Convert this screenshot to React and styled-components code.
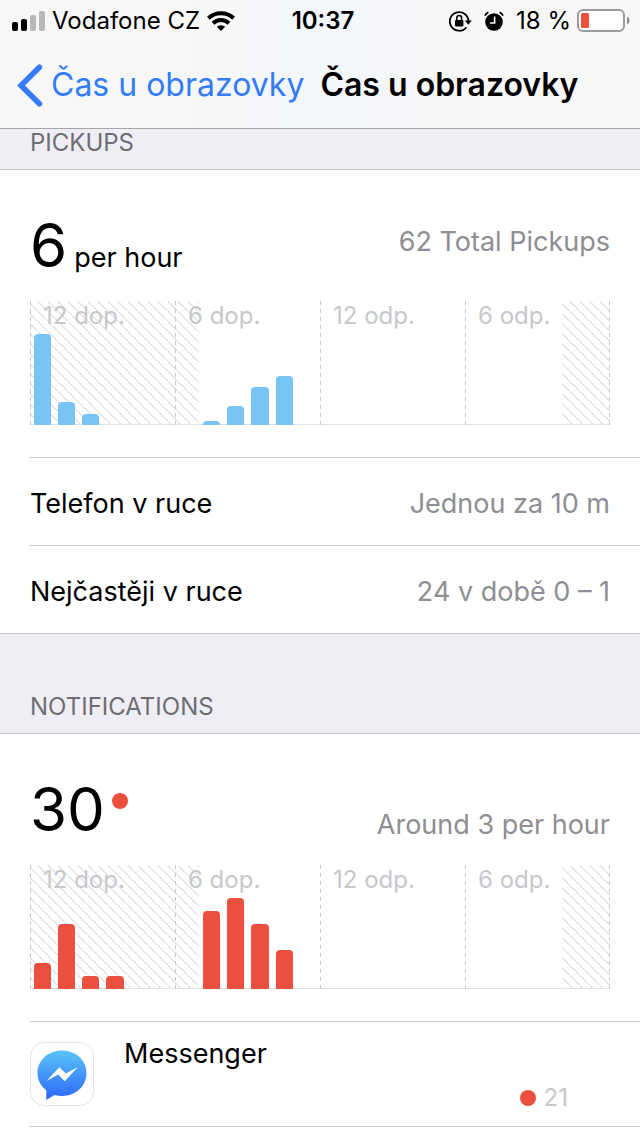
import styled, { createGlobalStyle } from "styled-components";

const GlobalStyle = createGlobalStyle`
  * {
    box-sizing: border-box;
  }

  body {
    margin: 0;
    background: #ffffff;
    color: #000000;
    font-family: Inter, "Liberation Sans", sans-serif;
    font-size: 27px;
    line-height: 32px;
  }

  h1,
  h2,
  h3,
  p,
  ul {
    margin: 0;
    padding: 0;
    font-size: inherit;
    font-weight: 400;
  }
`;

const Header = styled.header`
  background: linear-gradient(90deg, #f7f7f7 30%, #f3f6fb 50%, #f7f7f7 75%);
  border-bottom: 1px solid #a7a7ab;
`;

const StatusBar = styled.div`
  display: grid;
  grid-template-columns: 1fr auto 1fr;
  align-items: center;
  height: 42px;
  padding: 0 10px 0 12px;
  font-size: 24px;
  line-height: 28px;
`;

const StatusGroup = styled.div`
  display: flex;
  align-items: center;
  justify-content: ${(props) => (props.$end ? "flex-end" : "flex-start")};
  gap: ${(props) => (props.$end ? "12px" : "7px")};
  white-space: nowrap;
`;

const Clock = styled.time`
  padding-left: 4px;
  font-weight: 600;
`;

const BatteryGroup = styled.span`
  display: flex;
  align-items: center;
  gap: 6px;
`;

const NavBar = styled.nav`
  display: flex;
  align-items: center;
  height: 86px;
  padding: 0 16px;
  gap: 16px;
  font-size: 32px;
  line-height: 40px;
  white-space: nowrap;
`;

const BackLink = styled.a`
  display: flex;
  align-items: center;
  gap: 8px;
  color: #347cf7;
  text-decoration: none;
`;

const Title = styled.h1`
  font-weight: 600;
`;

const SectionHeader = styled.h2`
  display: flex;
  align-items: flex-end;
  height: ${(props) => (props.$scrolled ? "41px" : "101px")};
  padding: 0 30px 12px;
  border-top: ${(props) => (props.$scrolled ? "none" : "1px solid #c8c7cc")};
  border-bottom: 1px solid #c8c7cc;
  background: #efeef4;
  color: #6d6d72;
  font-size: 24px;
  line-height: 28px;
`;

const Summary = styled.div`
  display: flex;
  align-items: flex-start;
  justify-content: space-between;
  height: 131px;
  padding: 39px 30px 0;
`;

const Total = styled.p`
  display: flex;
  align-items: baseline;
  gap: 7px;
`;

const Big = styled.span`
  font-size: 60px;
  line-height: 72px;
`;

const Average = styled.p`
  padding-top: ${(props) => (props.$low ? "36px" : "17px")};
  color: #8e8e93;
`;

const Dot = styled.span`
  width: 16px;
  height: 16px;
  border-radius: 50%;
  background: #eb4f3d;
  align-self: ${(props) => (props.$raised ? "flex-start" : "center")};
  margin-top: ${(props) => (props.$raised ? "20px" : "0")};
`;

const Plot = styled.div`
  display: grid;
  grid-template-columns: repeat(24, 1fr);
  grid-template-rows: 124px;
  margin: 0 30px 32px;
  background: linear-gradient(#e2e1e8, #e2e1e8) bottom / 100% 1px no-repeat;
`;

const Downtime = styled.div`
  grid-row: 1;
  grid-column: ${(props) => props.$from + 1} / ${(props) => props.$to + 1};
  margin-bottom: 1px;
  background: linear-gradient(
      45deg,
      transparent 45%,
      #e4e4e7 45%,
      #e4e4e7 55%,
      transparent 55%
    )
    8px 0 / 10px 10px;
`;

const dashes = "repeating-linear-gradient(#c7c7cc 0 4px, transparent 4px 8px)";

const Quarter = styled.div`
  grid-row: 1;
  grid-column: ${(props) => props.$from + 1} / span 6;
  padding-left: 13px;
  background: ${dashes} left / 1px 100% no-repeat
    ${(props) => props.$last && `, ${dashes} right / 1px 100% no-repeat`};
  color: #c7c7cc;
  font-size: 24px;
  line-height: 30px;
`;

const Bar = styled.div`
  grid-row: 1;
  grid-column: ${(props) => props.$hour + 1};
  align-self: end;
  margin: 0 3px 0 4px;
  border-radius: 4px 4px 0 0;
  background: ${(props) => props.$color};
`;

const List = styled.ul`
  list-style: none;
  padding-left: 30px;
`;

const Row = styled.li`
  display: flex;
  align-items: center;
  justify-content: space-between;
  height: 88px;
  padding: 4px 30px 0 0;
  border-top: 1px solid #c8c7cc;
`;

const Value = styled.span`
  color: #8e8e93;
`;

const AppRow = styled.li`
  display: flex;
  height: 106px;
  gap: 30px;
  padding: 20px 72px 0 0;
  border-top: 1px solid #c8c7cc;
  border-bottom: 1px solid #c8c7cc;
`;

const AppInfo = styled.div`
  flex: 1;
  display: flex;
  flex-direction: column;
  justify-content: space-between;
  padding-bottom: 14px;
  margin-top: -4px;
`;

const Count = styled.p`
  display: flex;
  align-self: flex-end;
  gap: 8px;
  color: #c7c7cc;
  font-size: 24px;
  line-height: 28px;
`;

// hour of day -> count
const PICKUPS = { 0: 24, 1: 6, 2: 3, 7: 1, 8: 5, 9: 10, 10: 13 };
const NOTIFICATIONS = { 0: 2, 1: 5, 2: 1, 3: 1, 7: 6, 8: 7, 9: 5, 10: 3 };

const QUARTERS = ["12 dop.", "6 dop.", "12 odp.", "6 odp."];
const BAR_AREA = 91;

function DayChart({ data, color }) {
  const max = Math.max(...Object.values(data));
  return (
    <Plot>
      <Downtime $from={0} $to={7} />
      <Downtime $from={22} $to={24} />
      {QUARTERS.map((label, i) => (
        <Quarter key={label} $from={i * 6} $last={i === 3}>
          {label}
        </Quarter>
      ))}
      {Object.entries(data).map(([hour, count]) => (
        <Bar
          key={hour}
          $hour={Number(hour)}
          $color={color}
          style={{ height: Math.round((count / max) * BAR_AREA) }}
        />
      ))}
    </Plot>
  );
}

const SignalIcon = () => (
  <svg width="33" height="20" viewBox="0 0 33 20" aria-hidden="true">
    <rect x="0" y="11" width="6" height="9" rx="2" />
    <rect x="9" y="8" width="6" height="12" rx="2" />
    <rect x="18" y="4" width="6" height="16" rx="2" fill="#b9b9bb" />
    <rect x="27" y="0" width="6" height="20" rx="2" fill="#b9b9bb" />
  </svg>
);

const WifiIcon = () => (
  <svg width="28" height="20" viewBox="0 0 28 20" aria-hidden="true">
    <path d="M14 20 9.8 15.8a6.2 6.2 0 0 1 8.4 0z" />
    <g fill="none" stroke="#000" strokeWidth="4">
      <path d="M6 12.2a11.5 11.5 0 0 1 16 0" />
      <path d="M1.4 7.2a18.4 18.4 0 0 1 25.2 0" />
    </g>
  </svg>
);

const LockIcon = () => (
  <svg width="23" height="21" viewBox="0 0 23 21" aria-hidden="true">
    <path
      d="M17.4 16.2A9.3 9.3 0 1 1 19.4 10"
      fill="none"
      stroke="#000"
      strokeWidth="1.8"
    />
    <path d="M15.8 9.4h7L19.3 13.8z" />
    <rect x="6" y="9" width="8.4" height="6.6" rx="1" />
    <path
      d="M7.8 9.4V7a2.4 2.4 0 0 1 4.8 0v2.4"
      fill="none"
      stroke="#000"
      strokeWidth="1.5"
    />
  </svg>
);

const AlarmIcon = () => (
  <svg width="20" height="20" viewBox="0 0 20 20" aria-hidden="true">
    <circle cx="10" cy="11" r="8.8" />
    <path
      d="M.9 4.6A8 8 0 0 1 4.4 1.2M15.6 1.2a8 8 0 0 1 3.5 3.4"
      fill="none"
      stroke="#000"
      strokeWidth="1.8"
    />
    <path d="M10.6 5.6V12H6" fill="none" stroke="#fff" strokeWidth="1.6" />
  </svg>
);

const BatteryIcon = () => (
  <svg width="53" height="24" viewBox="0 0 53 24" aria-hidden="true">
    <rect
      x="1"
      y="1"
      width="46"
      height="21"
      rx="5"
      fill="#fdfdfd"
      stroke="#9b9b9d"
      strokeWidth="2"
    />
    <rect x="4" y="4" width="8" height="15" rx="1.5" fill="#eb4f3d" />
    <path d="M50 7.6a4.4 4.4 0 0 1 0 8z" fill="#8e8e90" />
  </svg>
);

const BackIcon = () => (
  <svg width="27" height="43" viewBox="0 0 27 43" aria-hidden="true">
    <path
      d="M23.4 3.2 5 21.5l18.4 18.3"
      fill="none"
      stroke="currentColor"
      strokeWidth="5.5"
      strokeLinecap="round"
    />
  </svg>
);

const MessengerIcon = () => (
  <svg width="64" height="64" viewBox="0 0 64 64" aria-hidden="true">
    <defs>
      <linearGradient id="bubble" x1="0" y1="0" x2="0" y2="1">
        <stop offset="0" stopColor="#5ac4fa" />
        <stop offset="1" stopColor="#2b66f6" />
      </linearGradient>
    </defs>
    <rect
      x=".5"
      y=".5"
      width="63"
      height="63"
      rx="14"
      fill="#fff"
      stroke="#e3e3e5"
    />
    <path
      d="M32 8.5c-14 0-24.5 10-24.5 22.6 0 7 3.3 13 8.8 17.2V58l8.2-4.9c2.4.6 4.9.9 7.5.9 14 0 24.5-10 24.5-22.9C56.5 18.500 46 8.5 32 8.5z"
      fill="url(#bubble)"
    />
    <path
      d="M16.5 39 29.3 25.300l6.600 6.300L48 25 34.700 39.200l-6.600-6.700z"
      fill="#fff"
    />
  </svg>
);

function App() {
  return (
    <>
      <GlobalStyle />
      <Header>
        <StatusBar>
          <StatusGroup>
            <SignalIcon />
            <span>Vodafone CZ</span>
            <WifiIcon />
          </StatusGroup>
          <Clock>10:37</Clock>
          <StatusGroup $end>
            <LockIcon />
            <AlarmIcon />
            <BatteryGroup>
              <span>18 %</span>
              <BatteryIcon />
            </BatteryGroup>
          </StatusGroup>
        </StatusBar>
        <NavBar>
          <BackLink href="#back">
            <BackIcon />
            Čas u obrazovky
          </BackLink>
          <Title>Čas u obrazovky</Title>
        </NavBar>
      </Header>
      <main>
        <section>
          <SectionHeader $scrolled>PICKUPS</SectionHeader>
          <Summary>
            <Total>
              <Big>6</Big>
              <span>per hour</span>
            </Total>
            <Average>62 Total Pickups</Average>
          </Summary>
          <DayChart data={PICKUPS} color="#78c5f5" />
          <List>
            <Row>
              <span>Telefon v ruce</span>
              <Value>Jednou za 10 m</Value>
            </Row>
            <Row>
              <span>Nejčastěji v ruce</span>
              <Value>24 v době 0 – 1</Value>
            </Row>
          </List>
        </section>
        <section>
          <SectionHeader>NOTIFICATIONS</SectionHeader>
          <Summary>
            <Total>
              <Big>30</Big>
              <Dot $raised />
            </Total>
            <Average $low>Around 3 per hour</Average>
          </Summary>
          <DayChart data={NOTIFICATIONS} color="#eb4f3d" />
          <List>
            <AppRow>
              <MessengerIcon />
              <AppInfo>
                <h3>Messenger</h3>
                <Count>
                  <Dot />
                  21
                </Count>
              </AppInfo>
            </AppRow>
          </List>
        </section>
      </main>
    </>
  );
}

export default App;
